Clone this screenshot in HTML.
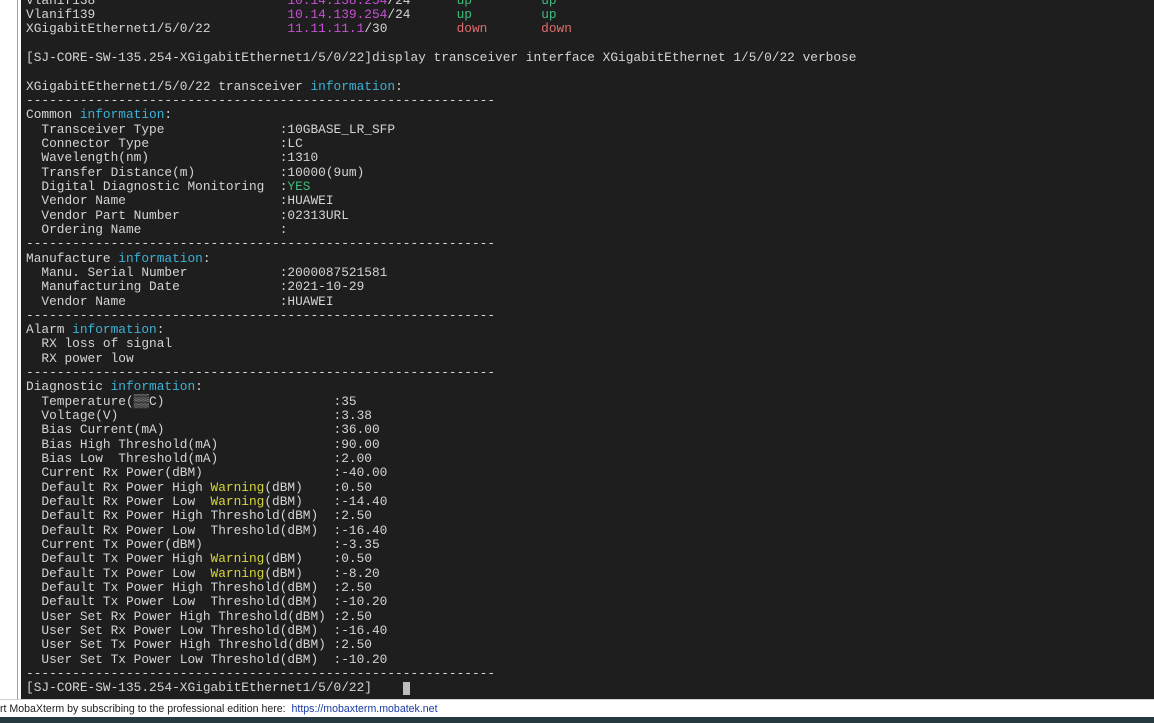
<!DOCTYPE html>
<html><head><meta charset="utf-8"><style>
html,body{margin:0;padding:0;width:1154px;height:723px;overflow:hidden;background:#fff;position:relative}
#l{position:absolute;left:0;top:0;width:17px;height:699px;background:#fff;border-right:1px solid #a0a0a0}
#t{position:absolute;left:21px;top:0;width:1133px;height:699px;background:#1e1e1e;overflow:hidden}
pre{margin:0;position:absolute;left:5px;top:-6.4px;font-family:"Liberation Mono",monospace;font-size:12.82px;line-height:14.33px;color:#d4d4d4;white-space:pre}
.m{color:#c94fd6}.g{color:#3dbd7d}.r{color:#e06c6c}.c{color:#3ab3d6}.y{color:#d6d63a}
#cur{position:absolute;left:403px;top:682px;width:7px;height:13px;background:#bdbdbd}
#b{position:absolute;left:0;top:699px;width:1154px;height:18px;background:#fff;border-top:1px solid #d0d0d0;font-family:"Liberation Sans",sans-serif;font-size:10.6px;line-height:18px;color:#222;white-space:nowrap}
#b a{color:#1a3aa8;text-decoration:none}
#k{position:absolute;left:0;top:717px;width:1154px;height:6px;background:#273a40}
</style></head><body>
<div id="l"></div>
<div id="t"><pre>Vlanif138                         <span class="m">10.14.138.254</span>/24      <span class="g">up</span>         <span class="g">up</span>
Vlanif139                         <span class="m">10.14.139.254</span>/24      <span class="g">up</span>         <span class="g">up</span>
XGigabitEthernet1/5/0/22          <span class="m">11.11.11.1</span>/30         <span class="r">down</span>       <span class="r">down</span>

[SJ-CORE-SW-135.254-XGigabitEthernet1/5/0/22]display transceiver interface XGigabitEthernet 1/5/0/22 verbose

XGigabitEthernet1/5/0/22 transceiver <span class="c">information</span>:
-------------------------------------------------------------
Common <span class="c">information</span>:
  Transceiver Type               :10GBASE_LR_SFP
  Connector Type                 :LC
  Wavelength(nm)                 :1310
  Transfer Distance(m)           :10000(9um)
  Digital Diagnostic Monitoring  :<span class="g">YES</span>
  Vendor Name                    :HUAWEI
  Vendor Part Number             :02313URL
  Ordering Name                  :
-------------------------------------------------------------
Manufacture <span class="c">information</span>:
  Manu. Serial Number            :2000087521581
  Manufacturing Date             :2021-10-29
  Vendor Name                    :HUAWEI
-------------------------------------------------------------
Alarm <span class="c">information</span>:
  RX loss of signal
  RX power low
-------------------------------------------------------------
Diagnostic <span class="c">information</span>:
  Temperature(▒▒C)                      :35
  Voltage(V)                            :3.38
  Bias Current(mA)                      :36.00
  Bias High Threshold(mA)               :90.00
  Bias Low  Threshold(mA)               :2.00
  Current Rx Power(dBM)                 :-40.00
  Default Rx Power High <span class="y">Warning</span>(dBM)    :0.50
  Default Rx Power Low  <span class="y">Warning</span>(dBM)    :-14.40
  Default Rx Power High Threshold(dBM)  :2.50
  Default Rx Power Low  Threshold(dBM)  :-16.40
  Current Tx Power(dBM)                 :-3.35
  Default Tx Power High <span class="y">Warning</span>(dBM)    :0.50
  Default Tx Power Low  <span class="y">Warning</span>(dBM)    :-8.20
  Default Tx Power High Threshold(dBM)  :2.50
  Default Tx Power Low  Threshold(dBM)  :-10.20
  User Set Rx Power High Threshold(dBM) :2.50
  User Set Rx Power Low Threshold(dBM)  :-16.40
  User Set Tx Power High Threshold(dBM) :2.50
  User Set Tx Power Low Threshold(dBM)  :-10.20
-------------------------------------------------------------
[SJ-CORE-SW-135.254-XGigabitEthernet1/5/0/22]</pre></div>
<div id="cur"></div>
<div id="b">rt MobaXterm by subscribing to the professional edition here:&nbsp; <a>https://mobaxterm.mobatek.net</a></div>
<div id="k"></div>
</body></html>
